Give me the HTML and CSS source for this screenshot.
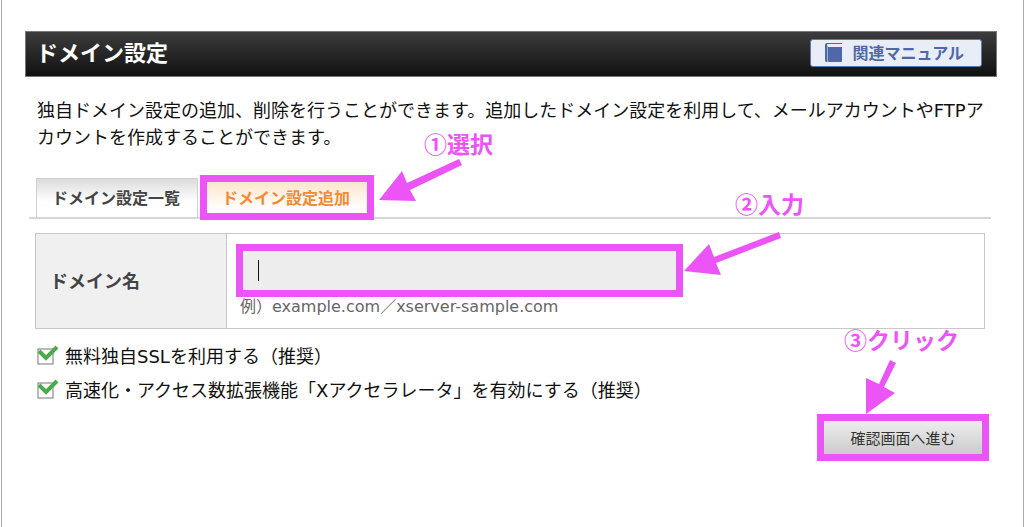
FILE: index.html
```html
<!DOCTYPE html>
<html lang="ja">
<head>
    <meta charset="UTF-8">
    <title>ドメイン設定</title>
    <link rel="stylesheet" href="styles.css">
</head>
<body>
<div class="page">
    <div class="title">
        <h1>ドメイン設定</h1>
        <a class="manual" href="#">
            <svg width="17" height="20" viewBox="0 0 17 20">
                <path d="M2 0H17V1H3Q2 1 2 2V19H1Q0 19 0 17V2Q0 0 2 0Z" fill="#5068a8"/>
                <path d="M3 4H17V18Q17 19 16 19H4Q3 19 3 18Z" fill="#5068a8"/>
                <path d="M2 2V19H3V3Z" fill="#9fb0d8"/>
            </svg>
            関連マニュアル
        </a>
    </div>
    <p class="lead">独自ドメイン設定の追加、削除を行うことができます。追加したドメイン設定を利用して、メールアカウントやFTPアカウントを作成することができます。</p>

    <ul class="tabs">
        <li><a class="tab" href="#">ドメイン設定一覧</a></li>
        <li class="mark-tab">
            <a class="tab tab-on" href="#">ドメイン設定追加</a>
            <div class="note note1">①選択</div>
            <svg class="arrow arrow1" width="84" height="42" viewBox="0 0 84 42">
                <path d="M0 40L23 11L28 23L80 -1L83 5L31 30L37 41Z"/>
            </svg>
        </li>
    </ul>

    <form>
        <table class="form-table">
            <tr>
                <th><label for="domain">ドメイン名</label></th>
                <td>
                    <div class="field">
                        <input id="domain" class="domain" type="text">
                        <span class="caret"></span>
                        <div class="note note2">②入力</div>
                        <svg class="arrow arrow2" width="98" height="44" viewBox="0 0 98 44">
                            <path d="M0 38L25 11L30 24L95 -1L97 5L32 30L37 42Z"/>
                        </svg>
                    </div>
                    <div class="hint">例）example.com／xserver-sample.com</div>
                </td>
            </tr>
        </table>

        <!-- オプション -->
        <div class="options">
            <label class="option"><input type="checkbox" checked><svg width="22" height="20" viewBox="0 0 22 20"><rect x="1" y="4" width="15" height="15" fill="#fff" stroke="#777"/><path d="M2 6L9 13L20 2" fill="none" stroke="#4caa4c" stroke-width="4"/></svg>無料独自SSLを利用する（推奨）</label>
            <label class="option"><input type="checkbox" checked><svg width="22" height="20" viewBox="0 0 22 20"><rect x="1" y="4" width="15" height="15" fill="#fff" stroke="#777"/><path d="M2 6L9 13L20 2" fill="none" stroke="#4caa4c" stroke-width="4"/></svg>高速化・アクセス数拡張機能「Xアクセラレータ」を有効にする（推奨）</label>
        </div>

        <div class="actions">
            <div class="submit-box">
                <button class="submit" type="button">確認画面へ進む</button>
                <div class="note note3">③クリック</div>
                <svg class="arrow arrow3" width="31" height="56" viewBox="0 0 31 56">
                    <path d="M0 54V18L13 24L24 0L30 3L18 27L29 33Z"/>
                </svg>
            </div>
        </div>
    </form>
</div>
</body>
</html>
```
FILE: styles.css
```css
* {box-sizing: border-box;}
body {margin: 0; background: #fff; color: #111;
    font: 18px/27px "DejaVu Sans", "Noto Sans CJK JP", sans-serif;}
.page {margin: 0 0 0 1px; min-height: 100vh; padding: 31px 26px 24px 23px;
    border-left: 1px solid #aaa; border-right: 1px solid #aaa;}

/* タイトルバー */
.title {display: flex; align-items: center; justify-content: space-between; height: 46px;
    padding: 0 14px 2px 10px; border: 1px solid #777;
    background: linear-gradient(#3c3c3c, #111);}
.title h1 {margin: 0; color: #fff; font-size: 22px; font-weight: bold;}
.manual {display: flex; align-items: center; gap: 10px; height: 28px; padding: 0 17px 0 14px;
    border: 1px solid #5878bc; border-radius: 3px; background: #e9edf8;
    color: #5068a8; font-size: 16px; font-weight: bold; text-decoration: none;}

.lead {margin: 20px 0 27px; padding: 0 10px 0 12px;}

/* タブ */
.tabs {display: flex; gap: 8px; margin: 0 6px 0 4px; padding: 0 0 0 7px;
    list-style: none; border-bottom: 2px solid #d6d6d6;}
.tab {display: block; height: 39px; padding: 0 17px 0 15px; border: 1px solid #d0d0d0; border-bottom: 0;
    background: linear-gradient(#dcdcdc, #fff 60%);
    color: #444; font-size: 16px; line-height: 40px; font-weight: bold; text-decoration: none;}
.tab-on {border-color: #fbe3c8; background: linear-gradient(#fde3c6, #fff 80%); color: #f58a32;}
.mark-tab {position: relative;}
.mark-tab::after {content: ""; position: absolute; top: -3px; right: -6px; bottom: -3px; left: -6px;
    border: 7px solid #ec54f8;}

/* 入力欄 */
.form-table {width: calc(100% - 22px); margin: 14px 0 0 10px; border-collapse: collapse;}
.form-table th, .form-table td {border: 1px solid #c8c8c8;}
.form-table th {width: 191px; padding: 0 14px; background: #f0f0f0; color: #444; text-align: left;}
.form-table td {padding: 10px 8px 11px 9px;}
.field {position: relative; width: 447px;}
.domain {display: block; width: 100%; height: 53px; padding: 0 16px;
    border: 7px solid #ec54f8; background: #ededed; font: inherit; outline: none;}
.caret {position: absolute; left: 22px; top: 16px; width: 1px; height: 21px; background: #111;}
.hint {padding-left: 4px; color: #666; font-size: 16px; line-height: 20px;}

/* チェックボックス */
.options {display: flex; flex-direction: column; gap: 7px; margin: 14px 0 0 12px;}
.option {position: relative; display: flex; align-items: center; gap: 6px;}
.option input {position: absolute; left: 0; top: 5px; width: 16px; height: 16px; margin: 0; opacity: 0;}
/* チェックの絵は文字より少し上に置く */
.option svg {flex: none; margin-bottom: 4px;}

/* 送信ボタン */
.actions {display: flex; justify-content: flex-end; margin: 10px 8px 0 0;}
.submit-box {position: relative;}
.submit {display: block; width: 172px; height: 47px; padding: 0; border: 7px solid #ec54f8;
    background: linear-gradient(#ededed, #cbcbcb); background-clip: padding-box;
    color: #333; font: 15px/30px "Noto Sans CJK JP", sans-serif;}

/* 説明の書き込み */
.note {position: absolute; color: #ec54f8; white-space: nowrap;
    font: bold 23px/30px "Noto Sans CJK JP", sans-serif;}
.arrow {position: absolute; overflow: visible; fill: #ec54f8;}
.note1 {left: 218px; top: -50px;}
.arrow1 {left: 173px; top: -18px;}
.note2 {left: 499px; top: -56px;}
.arrow2 {left: 448px; top: -11px;}
.note3 {left: 27px; top: -90px;}
.arrow3 {left: 49px; top: -54px;}
```
